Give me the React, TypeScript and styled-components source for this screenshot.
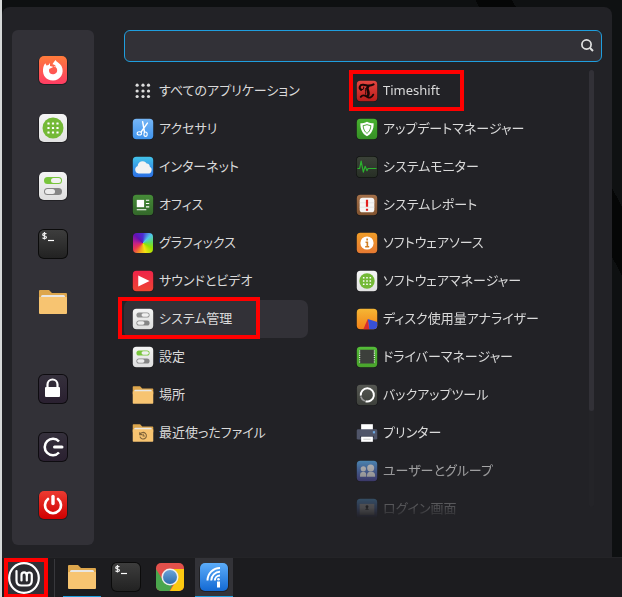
import React from "react";
import styled, { createGlobalStyle, css } from "styled-components";

const color = {
  panel: "#222226",
  raised: "#323137",
  taskbar: "#1c1c1f",
  accent: "#1f9ede",
  text: "#dadada",
  mark: "#ff0000",
};

const GlobalStyle = createGlobalStyle`
  * { box-sizing: border-box; }
  body { margin: 0; background: #0c0e0f; }
  button, input {
    font: inherit;
    color: inherit;
    background: none;
    border: 0;
    padding: 0;
    margin: 0;
  }
  svg { display: block; }
`;

const Screen = styled.div`
  display: flex;
  flex-direction: column;
  min-height: 100vh;
  border-left: 2px solid #d6d8d8;
  color: ${color.text};
  font-family: "Noto Sans", "Noto Sans CJK JP", sans-serif;
  font-size: 13px;
  line-height: 20px;
  font-feature-settings: "palt";
`;

const Desktop = styled.main`
  flex: 1;
  display: flex;
  padding: 7px 10px 0 0;
  background: linear-gradient(62deg, #0c0e0f 12%, #050606 12% 20%, #0e1011 20% 84%, #050606 84% 88%, #0f1112 88%);
`;

const Menu = styled.section`
  flex: 1;
  display: flex;
  gap: 30px;
  padding: 23px 10px 12px;
  background: ${color.panel};
  border-radius: 8px 8px 0 0;
`;

const Sidebar = styled.nav`
  flex: none;
  width: 82px;
  display: flex;
  flex-direction: column;
  justify-content: space-between;
  padding: 11px 0;
  background: ${color.raised};
  border-radius: 6px;
`;

const SidebarGroup = styled.div`
  display: flex;
  flex-direction: column;
`;

const SidebarButton = styled.button`
  display: flex;
  align-items: center;
  justify-content: center;
  height: 58px;
`;

const Content = styled.div`
  flex: 1;
  min-width: 0;
  display: flex;
  flex-direction: column;
  gap: 8px;
`;

const SearchBox = styled.label`
  display: flex;
  align-items: center;
  height: 32px;
  padding: 0 6px 2px 10px;
  background: ${color.raised};
  border: 1px solid ${color.accent};
  border-radius: 6px;
`;

const SearchInput = styled.input`
  flex: 1;
  min-width: 0;
  outline: none;
`;

const Columns = styled.div`
  flex: 1;
  display: grid;
  grid-template-columns: 184px 1fr 5px;
  column-gap: 40px;
  padding-right: 8px;
`;

const ItemList = styled.ul<{ $fading?: boolean }>`
  list-style: none;
  margin: 0;
  padding: 2px 0 0;
  ${(p) =>
    p.$fading &&
    css`
      margin-right: -36px;
      mask-image: linear-gradient(#000 372px, rgba(0, 0, 0, 0.25) 438px, transparent 448px);
    `}
`;

const Item = styled.li`
  position: relative;
`;

const ItemButton = styled.button<{ $selected?: boolean }>`
  display: flex;
  align-items: center;
  gap: 5px;
  width: 100%;
  height: 38px;
  padding: 0 8px;
  border-radius: 7px;
  text-align: left;
  white-space: nowrap;
  background: ${(p) => (p.$selected ? color.raised : "transparent")};
`;

const ItemLabel = styled.span`
  padding-bottom: 2px;
`;

const CategoryMark = styled.span`
  position: absolute;
  inset: -3px 48px -1px -6px;
  border: 4px solid ${color.mark};
  pointer-events: none;
`;

const AppMark = styled.span`
  position: absolute;
  top: -2px;
  left: 1px;
  width: 115px;
  height: 41px;
  border: 4px solid ${color.mark};
  pointer-events: none;
`;

const ScrollTrack = styled.div`
  height: 437px;
  background: #242428;
  border-radius: 3px;
`;

const ScrollThumb = styled.div`
  height: 78%;
  background: ${color.raised};
  border-radius: 3px;
`;

const Taskbar = styled.footer`
  display: flex;
  height: 40px;
  padding-left: 2px;
  background: ${color.taskbar};
  border-top: 1px solid #242427;
`;

const StartButton = styled.button`
  width: 44px;
  display: flex;
  align-items: center;
  background: ${color.raised};
  border: 4px solid ${color.mark};
  border-bottom-width: 3px;
`;

const Separator = styled.span`
  width: 1px;
  margin: 1px 8px 0 6px;
  background: #38383c;
`;

const TaskList = styled.div`
  display: flex;
  gap: 6px;
`;

const TaskButton = styled.button<{ $open?: boolean; $focused?: boolean }>`
  display: flex;
  align-items: center;
  justify-content: center;
  width: 38px;
  border-bottom: 1px solid ${(p) => (p.$open ? color.accent : "transparent")};
  background: ${(p) => (p.$focused ? "#333338" : "transparent")};
`;

const Spectrum = styled.span`
  flex: none;
  width: 20px;
  height: 20px;
  margin: 1px;
  border-radius: 4px;
  background: conic-gradient(
    #4a30d4, #50c8ea 45deg, #5fdc60 85deg, #94e000 120deg, #f2e412 165deg,
    #f29a20 200deg, #ea3550 235deg, #c0208a 270deg, #6410b4 315deg, #4a30d4
  );
`;

/* All drawings share a 30-unit grid with a 28-unit rounded tile. */
type IconProps = { size: number };

const Glyph = ({ size, children }: IconProps & { children: React.ReactNode }) => (
  <svg width={size} height={size} viewBox="0 0 30 30" fill="none" aria-hidden="true">
    {children}
  </svg>
);

type TileProps = IconProps & { id: string; from: string; to: string; edge?: string; children?: React.ReactNode };

const Tile = ({ size, id, from, to, edge, children }: TileProps) => (
  <Glyph size={size}>
    <defs>
      <linearGradient id={id} x1="0" y1="0" x2="0" y2="1">
        <stop stopColor={from} />
        <stop offset="1" stopColor={to} />
      </linearGradient>
    </defs>
    <rect x="0" y={edge ? 0 : 1} width="30" height={edge ? 30 : 29} rx="6" fill={edge ?? "#0005"} />
    <rect x="1" y="1" width="28" height="28" rx="5" fill={`url(#${id})`} />
    {children}
  </Glyph>
);

const Firefox = ({ size }: IconProps) => (
  <Tile size={size} id="firefox" from="#ff7c3b" to="#ff3c64">
    <path
      fill="#fff"
      d="M17.5 5c1 2.200 4.600 3.300 6 6 3.500 7-1.300 14.500-8.500 14.500S4.500 20 5 14.500c.2-2.500 1-4.600 2.300-6.300l1.200 2.300 2-.5 1.500-2v3l3 .8c-.5 1-2 1.300-3 1.700-1.200.600-.8 1.500-1 2.500.4 2.400 2.300 3.500 4.500 3.200 3-.4 4.400-3 3.300-5.700-.6-1.400-1.800-1.700-3.300-2 1.500-.5 2-.2 2.700.2-.8-1.500-2-2.300-3.700-2.500C15 8 16.500 6.500 17.500 5Z"
    />
  </Tile>
);

const dotGrid = [10.5, 15, 19.5];

const Software = ({ size }: IconProps) => (
  <Tile size={size} id="software" from="#f5f5f5" to="#e2e2e2">
    <circle cx="15" cy="15" r="10.500" fill="#74b936" />
    {dotGrid.flatMap((x) =>
      dotGrid.map((y) => <rect key={`${x}-${y}`} x={x - 1.1} y={y - 1.1} width="2.200" height="2.200" rx=".4" fill="#fff" />)
    )}
  </Tile>
);

const Switches = ({ size, on }: IconProps & { on: boolean }) => (
  <Tile size={size} id="switches" from="#f4f4f4" to="#dedede">
    <rect x="6" y="6" width="18" height="7" rx="3.500" fill={on ? "#78c53c" : "#8e8e8e"} />
    <rect x="13" y="7" width="10" height="5" rx="2.500" fill="#f0f0f0" />
    <rect x="6" y="17" width="18" height="7" rx="3.500" fill="#858585" />
    <rect x="7" y="18" width="10" height="5" rx="2.500" fill="#ececec" />
  </Tile>
);

const Terminal = ({ size }: IconProps) => (
  <Tile size={size} id="terminal" from="#3d3d3d" to="#222" edge="#0b0b0b">
    <path d="M8.500 4.800c-1.500-1-3.800-.4-3.800.9 0 1.700 3.800.9 3.800 2.600 0 1.400-2.600 1.600-4 .5M6.500 3v7.500" stroke="#eee" strokeWidth="1.200" />
    <path d="M10 11.500h6" stroke="#fff" strokeWidth="1.200" />
  </Tile>
);

const Folder = ({ size, recent }: IconProps & { recent?: boolean }) => (
  <Glyph size={size}>
    <path d="M1 4q0-1 1-1h9l3 3h14q1 0 1 1V14H1Z" fill="#dda64c" />
    <path d="M3 9.500Q3 8 4.500 8h21Q27 8 27 9.500V12H3Z" fill="#e8e6e3" />
    <path d="M1 10.500q0-.5.500-.5h27q.5 0 .5.500V26q0 1-1 1H2q-1 0-1-1Z" fill="#f7c471" />
    {recent && (
      <g stroke="#80643a" strokeWidth="1.500">
        <path d="M11.200 16.500a4.500 4.500 0 1 1-.4 3.500M10.500 14v3.200H14" />
        <path d="M15.200 16v3h2.300" />
      </g>
    )}
  </Glyph>
);

const Lock = ({ size }: IconProps) => (
  <Tile size={size} id="lock" from="#35303c" to="#2a2030" edge="#0e0c10">
    <path d="M9.500 14v-3.500a5 5 0 0 1 10 0V14" stroke="#fff" strokeWidth="2.200" />
    <rect x="7" y="13" width="15" height="10" rx="1" fill="#fff" />
  </Tile>
);

const Logout = ({ size }: IconProps) => (
  <Tile size={size} id="logout" from="#35303c" to="#2a2030" edge="#0e0c10">
    <path d="M21 9.500a8.200 8.200 0 1 0 0 11" stroke="#fff" strokeWidth="2.600" />
    <path d="M16.500 15h7.500" stroke="#fff" strokeWidth="3" strokeLinecap="round" />
  </Tile>
);

const Power = ({ size }: IconProps) => (
  <Tile size={size} id="power" from="#ec3b31" to="#d00000">
    <path d="M10 9a8 8 0 1 0 10 0" stroke="#fff" strokeWidth="2.600" strokeLinecap="round" />
    <path d="M15 6.500v7" stroke="#fff" strokeWidth="3.400" strokeLinecap="round" />
  </Tile>
);

const AllApps = ({ size }: IconProps) => (
  <Glyph size={size}>
    {[7, 15, 22.5].flatMap((x) =>
      [7, 15, 22.5].map((y) => <circle key={`${x}-${y}`} cx={x} cy={y} r="2.200" fill="#dcdcdc" />)
    )}
  </Glyph>
);

const Scissors = ({ size }: IconProps) => (
  <Tile size={size} id="scissors" from="#76b6f6" to="#3f93ec">
    <path d="M14.500 5l2.500 14M21 7l-8.500 12" stroke="#fff" strokeWidth="2" strokeLinecap="round" />
    <ellipse cx="10" cy="21" rx="3" ry="2.200" stroke="#fff" strokeWidth="1.500" />
    <ellipse cx="18.500" cy="22" rx="2.200" ry="3" stroke="#fff" strokeWidth="1.500" />
  </Tile>
);

const Cloud = ({ size }: IconProps) => (
  <Tile size={size} id="cloud" from="#43c4ea" to="#2b6ee4">
    <path d="M9 24a5.500 5.500 0 0 1-1.300-10.500C8 9 11 7 14.500 7c3 0 4.500 1.300 5.500 3.300 3 .2 4.300 2 4.300 4.200 2 1 2.700 2.600 2.500 4.500-.2 3-2 5-5 5Z" fill="#f2f2f2" />
  </Tile>
);

const Office = ({ size }: IconProps) => (
  <Tile size={size} id="office" from="#468c38" to="#33672a">
    <path d="M19 8.500h4.500M19 13h4.500M19 17.500h4.500M6.500 21.500h13" stroke="#fff" strokeWidth="1.600" />
    <rect x="6.500" y="8" width="10" height="10" fill="#fff" />
  </Tile>
);

const Play = ({ size }: IconProps) => (
  <Tile size={size} id="play" from="#ee2449" to="#ee4433">
    <path d="M8.500 7.500 24 15 8.500 22.500Z" fill="#fff" />
  </Tile>
);

const Timeshift = ({ size }: IconProps) => (
  <Tile size={size} id="timeshift" from="#e24540" to="#b91d1b">
    <g stroke="#190606" strokeLinecap="round">
      <path d="M7 13.500C3.500 11 5 6 10 6.500c5 .5 8 3 14-.5" strokeWidth="2.800" />
      <path d="M7 12.500c2 1 4-.5 3.500-3" strokeWidth="1.400" />
      <path d="M16.500 9c-4 3 4 8-1 13" strokeWidth="3.600" />
      <path d="M13 11.500c-1 3 1 5 0 8" strokeWidth="1.200" />
      <path d="M6.500 23c3-4 6-2 9 0s6 1 8-3" strokeWidth="2.600" />
    </g>
  </Tile>
);

const Shield = ({ size }: IconProps) => (
  <Tile size={size} id="shield" from="#48b22f" to="#358f25">
    <path d="M15 5c3 1.500 6 2.200 9 2.200C24.500 15 21 22 15 25 9 22 5.500 15 6 7.200c3 0 6-.7 9-2.200Z" fill="#fff" />
    <path d="M15 9c2 .8 3.500 1.200 5.300 1.300-.2 4.500-2 8.500-5.300 10.700-3.300-2.200-5.100-6.200-5.300-10.700C11.500 10.200 13 9.800 15 9Z" fill="#fff" stroke="#4aa435" strokeWidth="1.300" />
  </Tile>
);

const Monitor = ({ size }: IconProps) => (
  <Tile size={size} id="monitor" from="#3b4238" to="#272f25" edge="#101310">
    <path d="M2 17h3l2-10 3 15 2.500-8 2.500 6 1.500-3H28" stroke="#2bb32e" strokeWidth="1.600" strokeLinejoin="round" />
  </Tile>
);

const Report = ({ size }: IconProps) => (
  <Tile size={size} id="report" from="#a5714a" to="#80522f">
    <rect x="5" y="5" width="20" height="20" rx="4" fill="#f6f5f4" />
    <path d="M5 12h20M5 18h20" stroke="#ddd" strokeWidth="1" />
    <path d="M15 8v9.500M15 20v3" stroke="#e21f1f" strokeWidth="3" />
  </Tile>
);

const Info = ({ size }: IconProps) => (
  <Tile size={size} id="info" from="#f19d28" to="#e57932">
    <circle cx="15" cy="15" r="9" fill="#fff" />
    <path d="M15.200 8.800v2.800M13 14h2.500v6M12.500 20.200h5.500" stroke="#cf7c22" strokeWidth="2.200" />
  </Tile>
);

const Disk = ({ size }: IconProps) => (
  <Tile size={size} id="disk" from="#f5b735" to="#f38118">
    <path d="M16 15 18 29h6q5 0 5-5v-5Z" fill="#3850d5" />
    <path d="M16 15 10 29h8Z" fill="#d92d2d" />
  </Tile>
);

const Driver = ({ size }: IconProps) => (
  <Tile size={size} id="driver" from="#54bd38" to="#49a32c">
    <rect x="5" y="5" width="20" height="19" rx="1" fill="#3c3f3b" />
    <path d="M5 6v18M25 6v18" stroke="#edf5ea" strokeWidth="1.500" strokeDasharray="1.500 1.500" />
  </Tile>
);

const Backup = ({ size }: IconProps) => (
  <Tile size={size} id="backup" from="#565853" to="#3d403b">
    <path d="M6.500 16A9 9 0 1 1 13 23.500" stroke="#fff" strokeWidth="2.600" />
    <path d="M6.500 17q1 4 5.500 6.200" stroke="#999" strokeWidth="2.200" />
  </Tile>
);

const Printer = ({ size }: IconProps) => (
  <Glyph size={size}>
    <rect x="7" y="3" width="16" height="8" fill="#fff" />
    <rect x="1" y="10" width="28" height="14" rx="2" fill="#505569" />
    <rect x="23" y="12.500" width="3" height="3" fill="#6ea8e2" />
    <rect x="5.500" y="19" width="19" height="3" fill="#35394a" />
    <rect x="7" y="20" width="16" height="7" fill="#fff" />
    <path d="M10 23.500h10" stroke="#bbb" />
  </Glyph>
);

const Users = ({ size }: IconProps) => (
  <Tile size={size} id="users" from="#569fd6" to="#514b9e">
    <g fill="#dedede">
      <circle cx="10" cy="12" r="3.600" />
      <path d="M5.500 23v-3q0-3 3-3.500h3q2.500.5 2.500 3.500v3Z" />
      <circle cx="20" cy="11" r="4.800" />
      <path d="M15 23v-2.500q0-3.500 3-4.500h4q4 1 4 5v2Z" />
    </g>
  </Tile>
);

const LoginWindow = ({ size }: IconProps) => (
  <Tile size={size} id="login" from="#569fd6" to="#514b9e">
    <rect x="5" y="8" width="20" height="15" fill="#bbb" />
    <circle cx="15" cy="12" r="2" fill="#222" />
    <path d="M12.500 16q2.500-5 5 0Z" fill="#222" />
  </Tile>
);

const Chrome = ({ size }: IconProps) => (
  <Glyph size={size}>
    <defs>
      <clipPath id="chrome-tile">
        <rect x="1" y="1" width="28" height="28" rx="5" />
      </clipPath>
      <linearGradient id="chrome-core" x1="0" y1="0" x2="0" y2="1">
        <stop stopColor="#6ba4d8" />
        <stop offset="1" stopColor="#2e6dae" />
      </linearGradient>
    </defs>
    <g clipPath="url(#chrome-tile)">
      <path d="M1 1h28v28H1Z" fill="#e2504b" />
      <path d="M1 7l8 13 9 2-4 8H1Z" fill="#4aa64d" />
      <path d="M15 7h14v22H15l6-10Z" fill="#fbc911" />
    </g>
    <circle cx="15" cy="15" r="8.500" fill="#eee" />
    <circle cx="15" cy="15" r="7" fill="url(#chrome-core)" />
  </Glyph>
);

const Signal = ({ size }: IconProps) => (
  <Tile size={size} id="signal" from="#5cadfa" to="#1369d3">
    <g stroke="#fff" strokeWidth="2">
      <path d="M8.500 18.500A12.500 12.500 0 0 1 21 6" />
      <path d="M12.200 18.500A8.800 8.800 0 0 1 21 9.800" />
      <path d="M15.800 18.500A5.200 5.200 0 0 1 21 13.500" />
    </g>
    <rect x="18" y="19.500" width="3" height="6" fill="#fff" />
    <circle cx="19.500" cy="17.200" r="1.300" fill="#fff" />
  </Tile>
);

const MintLogo = () => (
  <svg width="32" height="32" viewBox="0 0 32 32" fill="none" aria-hidden="true">
    <circle cx="16" cy="16" r="14.800" fill="#2b2b30" stroke="#fff" strokeWidth="2.200" />
    <g stroke="#fff" strokeWidth="2.200" strokeLinecap="round">
      <path d="M8.500 9v9.500q0 5 5 5h5.500q4.800 0 4.800-5v-5.500a2.500 2.500 0 0 0-5 0V18.500" />
      <path d="M13.500 18.500v-5.500a2.600 2.600 0 0 1 5.200 0" />
    </g>
  </svg>
);

const SearchIcon = () => (
  <svg width="16" height="16" viewBox="0 0 16 16" fill="none" stroke="#e2e2e2" aria-hidden="true">
    <circle cx="7.500" cy="7.500" r="4.600" strokeWidth="1.700" />
    <path d="M11 11l3 3" strokeWidth="2" />
  </svg>
);

const LARGE = 30;
const SMALL = 22;

const favorites = [
  { name: "Firefox", icon: <Firefox size={LARGE} /> },
  { name: "ソフトウェアマネージャー", icon: <Software size={LARGE} /> },
  { name: "システム設定", icon: <Switches size={LARGE} on /> },
  { name: "端末", icon: <Terminal size={LARGE} /> },
  { name: "ファイル", icon: <Folder size={LARGE} /> },
];

const session = [
  { name: "画面をロック", icon: <Lock size={LARGE} /> },
  { name: "ログアウト", icon: <Logout size={LARGE} /> },
  { name: "終了", icon: <Power size={LARGE} /> },
];

const categories = [
  { name: "すべてのアプリケーション", icon: <AllApps size={SMALL} /> },
  { name: "アクセサリ", icon: <Scissors size={SMALL} /> },
  { name: "インターネット", icon: <Cloud size={SMALL} /> },
  { name: "オフィス", icon: <Office size={SMALL} /> },
  { name: "グラフィックス", icon: <Spectrum /> },
  { name: "サウンドとビデオ", icon: <Play size={SMALL} /> },
  { name: "システム管理", icon: <Switches size={SMALL} on={false} />, selected: true },
  { name: "設定", icon: <Switches size={SMALL} on /> },
  { name: "場所", icon: <Folder size={SMALL} /> },
  { name: "最近使ったファイル", icon: <Folder size={SMALL} recent /> },
];

const apps = [
  { name: "Timeshift", icon: <Timeshift size={SMALL} />, marked: true },
  { name: "アップデートマネージャー", icon: <Shield size={SMALL} /> },
  { name: "システムモニター", icon: <Monitor size={SMALL} /> },
  { name: "システムレポート", icon: <Report size={SMALL} /> },
  { name: "ソフトウェアソース", icon: <Info size={SMALL} /> },
  { name: "ソフトウェアマネージャー", icon: <Software size={SMALL} /> },
  { name: "ディスク使用量アナライザー", icon: <Disk size={SMALL} /> },
  { name: "ドライバーマネージャー", icon: <Driver size={SMALL} /> },
  { name: "バックアップツール", icon: <Backup size={SMALL} /> },
  { name: "プリンター", icon: <Printer size={SMALL} /> },
  { name: "ユーザーとグループ", icon: <Users size={SMALL} /> },
  { name: "ログイン画面", icon: <LoginWindow size={SMALL} /> },
];

const tasks = [
  { name: "ファイル", icon: <Folder size={LARGE} />, open: true },
  { name: "端末", icon: <Terminal size={LARGE} /> },
  { name: "Chrome", icon: <Chrome size={LARGE} /> },
  { name: "リモート接続", icon: <Signal size={LARGE} />, open: true, focused: true },
];

export default function App() {
  return (
    <Screen lang="ja">
      <GlobalStyle />
      <Desktop>
        <Menu>
          <Sidebar>
            {[favorites, session].map((group, i) => (
              <SidebarGroup key={i}>
                {group.map((entry) => (
                  <SidebarButton key={entry.name} type="button" aria-label={entry.name}>
                    {entry.icon}
                  </SidebarButton>
                ))}
              </SidebarGroup>
            ))}
          </Sidebar>
          <Content>
            <SearchBox>
              <SearchInput type="text" aria-label="検索" />
              <SearchIcon />
            </SearchBox>
            <Columns>
              <ItemList>
                {categories.map((c) => (
                  <Item key={c.name}>
                    <ItemButton type="button" $selected={c.selected}>
                      {c.icon}
                      <ItemLabel>{c.name}</ItemLabel>
                    </ItemButton>
                    {c.selected && <CategoryMark />}
                  </Item>
                ))}
              </ItemList>
              <ItemList $fading>
                {apps.map((a) => (
                  <Item key={a.name}>
                    <ItemButton type="button">
                      {a.icon}
                      <ItemLabel>{a.name}</ItemLabel>
                    </ItemButton>
                    {a.marked && <AppMark />}
                  </Item>
                ))}
              </ItemList>
              <ScrollTrack>
                <ScrollThumb />
              </ScrollTrack>
            </Columns>
          </Content>
        </Menu>
      </Desktop>
      <Taskbar>
        <StartButton type="button" aria-label="メニュー">
          <MintLogo />
        </StartButton>
        <Separator />
        <TaskList>
          {tasks.map((t) => (
            <TaskButton key={t.name} type="button" aria-label={t.name} $open={t.open} $focused={t.focused}>
              {t.icon}
            </TaskButton>
          ))}
        </TaskList>
      </Taskbar>
    </Screen>
  );
}
